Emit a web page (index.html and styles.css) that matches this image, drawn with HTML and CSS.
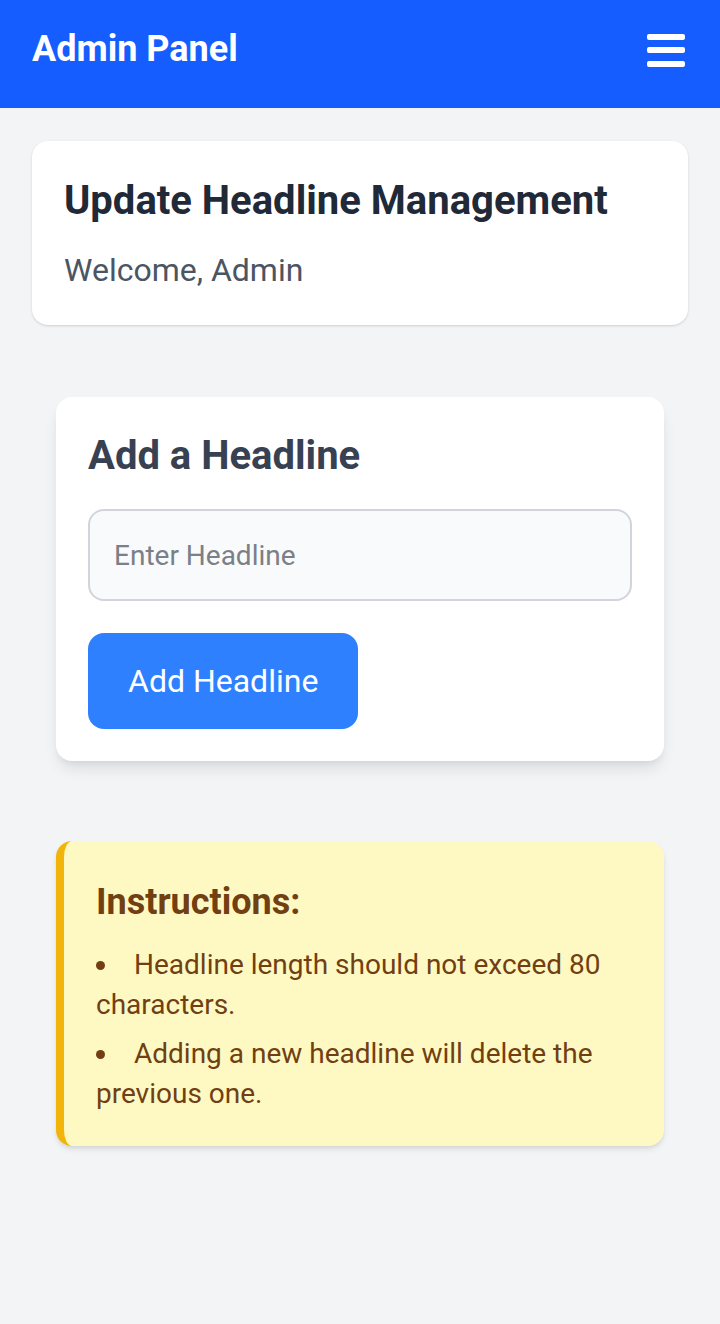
FILE: index.html
```html
<!DOCTYPE html>
<html lang="en">
<head>
<meta charset="utf-8">
<title>Admin Panel</title>
<link rel="stylesheet" href="styles.css">
</head>
<body>
<header class="topbar">
  <h1 class="brand">Admin Panel</h1>
  <button class="menu" aria-label="Menu">
    <span class="bar"></span><span class="bar"></span><span class="bar"></span>
  </button>
</header>
<main class="main">
  <section class="card intro">
    <h2 class="intro-title">Update Headline Management</h2>
    <p class="intro-text">Welcome, Admin</p>
  </section>
  <div class="inner">
    <section class="card form-card">
      <h2 class="form-title">Add a Headline</h2>
      <input class="field" type="text" placeholder="Enter Headline">
      <button class="btn">Add Headline</button>
    </section>
    <section class="note">
      <h3 class="note-title">Instructions:</h3>
      <ul class="note-list">
        <li>Headline length should not exceed 80 characters.</li>
        <li>Adding a new headline will delete the previous one.</li>
      </ul>
    </section>
  </div>
</main>
</body>
</html>
```

FILE: styles.css
```css
* { box-sizing: border-box; }
body {
  margin: 0;
  background: #f3f4f6;
  font-family: Roboto, "Liberation Sans", sans-serif;
  min-height: 1324px;
}
.topbar {
  height: 108px;
  background: #165dff;
  display: flex;
  align-items: center;
  justify-content: space-between;
  padding: 0 35px 8px 32px;
}
.brand {
  margin: 0;
  color: #fff;
  font-size: 36px;
  font-weight: 700;
  line-height: 1.2;
}
.menu {
  background: none;
  border: 0;
  padding: 0;
  width: 38px;
  display: flex;
  flex-direction: column;
  gap: 7.5px;
  cursor: pointer;
}
.bar {
  display: block;
  height: 6px;
  width: 38px;
  background: #fff;
  border-radius: 2px;
}
.main {
  padding: 33px 32px;
}
.card {
  background: #fff;
  border-radius: 16px;
}
.intro {
  padding: 32px 32px 32px;
  box-shadow: 0 1px 3px rgba(0,0,0,0.1), 0 1px 2px rgba(0,0,0,0.06);
}
.intro-title {
  margin: 0;
  font-size: 40px;
  font-weight: 700;
  line-height: 55px;
  color: #1f2937;
}
.intro-text {
  margin: 20px 0 0;
  font-size: 32px;
  line-height: 45px;
  color: #4b5563;
}
.inner {
  padding: 72px 24px 0;
  display: flex;
  flex-direction: column;
  gap: 80px;
}
.form-card {
  padding: 32px;
  box-shadow: 0 10px 15px -3px rgba(0,0,0,0.1), 0 4px 6px -2px rgba(0,0,0,0.05);
  display: flex;
  flex-direction: column;
  align-items: flex-start;
}
.form-title {
  margin: 0 0 26px;
  font-size: 40px;
  font-weight: 700;
  line-height: 54px;
  color: #374151;
}
.field {
  width: 100%;
  height: 92px;
  border: 2px solid #d1d5db;
  border-radius: 16px;
  background: #f9fafb;
  padding: 0 24px;
  font-family: inherit;
  font-size: 28px;
  color: #111827;
  outline: none;
}
.field::placeholder { color: #7b7f87; }
.btn {
  margin-top: 32px;
  height: 96px;
  padding: 0 40px;
  border: 0;
  border-radius: 16px;
  background: #2f80ff;
  color: #fff;
  font-family: inherit;
  font-size: 32px;
  cursor: pointer;
}
.note {
  background: #fef9c3;
  border-left: 8px solid #f2b40b;
  border-radius: 16px;
  padding: 40px 32px 32px;
  box-shadow: 0 4px 6px -1px rgba(0,0,0,0.1), 0 2px 4px -1px rgba(0,0,0,0.06);
  color: #713f12;
}
.note-title {
  margin: 0 0 21px;
  font-size: 36px;
  font-weight: 700;
  line-height: 43px;
}
.note-list {
  margin: 0;
  padding: 0;
  list-style: disc inside;
  font-size: 28px;
  line-height: 40px;
}
.note-list li + li { margin-top: 9px; }
```
